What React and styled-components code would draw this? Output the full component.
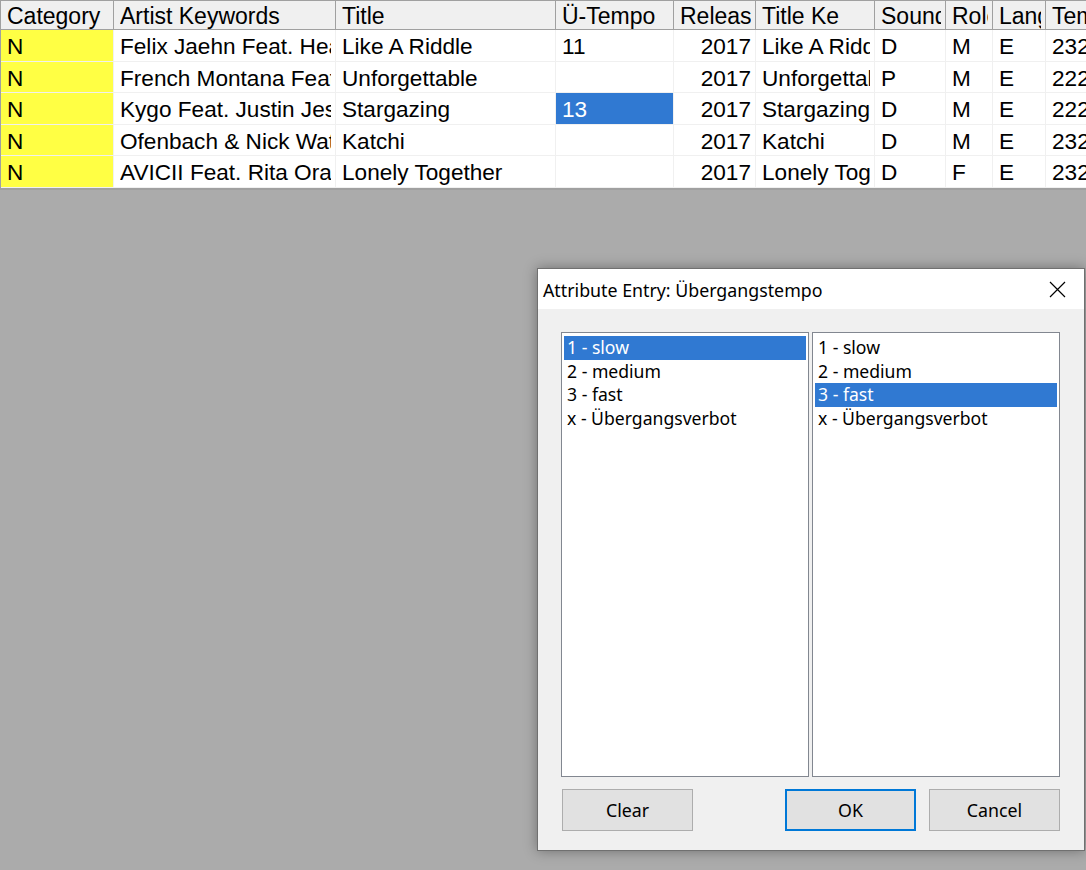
import React from "react";
import styled, { createGlobalStyle, css } from "styled-components";

const Global = createGlobalStyle`
  html, body { margin: 0; padding: 0; }
  body {
    background: #ababab;
    width: 1086px;
    height: 870px;
    overflow: hidden;
    font-family: "Liberation Sans", Arial, sans-serif;
  }
  #root { position: relative; width: 1086px; height: 870px; }
`;

const COLS = "113px 222px 220px 118px 82px 119px 71px 47px 53px 80px";

const Grid = styled.div`
  width: 1086px;
  border-top: 1px solid #a0a0a0;
  border-left: 1px solid #a0a0a0;
  border-bottom: 2px solid #a0a0a0;
  background: #ffffff;
  overflow: hidden;
  box-sizing: border-box;
`;

const Row = styled.div`
  display: grid;
  grid-template-columns: ${COLS};
  height: ${(p) => (p.$header ? "29px" : "31.6px")};
  box-sizing: border-box;
  border-bottom: 1px solid ${(p) => (p.$header ? "#a0a0a0" : "#f0f0f0")};
  background: ${(p) => (p.$header ? "#f0f0f0" : "#ffffff")};
`;

const Cell = styled.div`
  font-size: ${(p) => (p.$header ? "23px" : "22.6px")};
  line-height: ${(p) => (p.$header ? "28px" : "30px")};
  padding-top: ${(p) => (p.$header ? "1px" : "2px")};
  color: #000;
  white-space: nowrap;
  overflow: hidden;
  padding-left: 6px;
  padding-right: 4px;
  box-sizing: border-box;
  border-right: 1px solid ${(p) => (p.$header ? "#a0a0a0" : "#f0f0f0")};
  ${(p) =>
    p.$right &&
    css`
      text-align: right;
      padding-left: 0;
      padding-right: 4px;
    `}
  ${(p) =>
    p.$yellow &&
    css`
      background: #ffff44;
    `}
  ${(p) =>
    p.$selected &&
    css`
      background: #3079d2;
      color: #ffffff;
    `}
`;

const CellText = styled.span`
  display: block;
  overflow: hidden;
  white-space: nowrap;
`;

const headers = [
  "Category",
  "Artist Keywords",
  "Title",
  "Ü-Tempo",
  "Releas",
  "Title Ke",
  "Sound",
  "Role",
  "Language",
  "Tempo",
];

const rows = [
  ["N", "Felix Jaehn Feat. Hearts & Colors", "Like A Riddle", "11", "2017", "Like A Riddle", "D", "M", "E", "2320"],
  ["N", "French Montana Feat. Swae Lee", "Unforgettable", "", "2017", "Unforgettable", "P", "M", "E", "2220"],
  ["N", "Kygo Feat. Justin Jesso", "Stargazing", "13", "2017", "Stargazing", "D", "M", "E", "2220"],
  ["N", "Ofenbach & Nick Waterhouse", "Katchi", "", "2017", "Katchi", "D", "M", "E", "2320"],
  ["N", "AVICII Feat. Rita Ora", "Lonely Together", "", "2017", "Lonely Together", "D", "F", "E", "2320"],
];

const Dialog = styled.div`
  position: absolute;
  left: 537px;
  top: 268px;
  width: 548px;
  height: 583px;
  box-sizing: border-box;
  border: 1px solid #707070;
  background: #f0f0f0;
  box-shadow: 0 0 12px rgba(0, 0, 0, 0.35);
  display: flex;
  flex-direction: column;
  font-family: "Noto Sans", "Open Sans", sans-serif;
`;

const TitleBar = styled.div`
  height: 40px;
  background: #ffffff;
  display: flex;
  align-items: center;
  justify-content: space-between;
  padding: 0 18px 0 5px;
  flex-shrink: 0;
`;

const TitleText = styled.div`
  font-size: 17.8px;
  color: #000;
  padding-top: 2px;
`;

const CloseIcon = styled.svg`
  width: 17px;
  height: 17px;
  display: block;
`;

const Body = styled.div`
  flex: 1;
  display: flex;
  flex-direction: column;
  padding: 23px 24px 20px 23px;
`;

const Lists = styled.div`
  display: flex;
  gap: 3px;
  height: 445px;
`;

const ListBox = styled.div`
  width: 249px;
  height: 100%;
  box-sizing: border-box;
  border: 1px solid #828790;
  background: #ffffff;
  padding: 3px 2px;
  display: flex;
  flex-direction: column;
`;

const Item = styled.div`
  height: 23.6px;
  line-height: 23px;
  font-size: 17.6px;
  padding-left: 3px;
  color: ${(p) => (p.$selected ? "#ffffff" : "#000000")};
  background: ${(p) => (p.$selected ? "#3079d2" : "transparent")};
  white-space: nowrap;
`;

const Buttons = styled.div`
  display: flex;
  margin-top: 12px;
  padding-left: 1px;
  gap: 13px;
`;

const Button = styled.button`
  width: 131px;
  height: 42px;
  box-sizing: border-box;
  background: #e1e1e1;
  border: ${(p) => (p.$default ? "2px solid #0078d7" : "1px solid #adadad")};
  font-family: "Noto Sans", "Open Sans", sans-serif;
  font-size: 17.8px;
  color: #000;
  padding: 0;
  margin: 0;
  ${(p) =>
    p.$pushRight &&
    css`
      margin-left: auto;
    `}
`;

const options = ["1 - slow", "2 - medium", "3 - fast", "x - Übergangsverbot"];

export default function App() {
  return (
    <>
      <Global />
      <Grid>
        <Row $header>
          {headers.map((h) => (
            <Cell $header key={h}>
              <CellText>{h}</CellText>
            </Cell>
          ))}
        </Row>
        {rows.map((r, i) => (
          <Row key={i}>
            {r.map((v, j) => (
              <Cell
                key={j}
                $yellow={j === 0}
                $right={j === 4}
                $selected={i === 2 && j === 3}
              >
                <CellText>{v}</CellText>
              </Cell>
            ))}
          </Row>
        ))}
      </Grid>
      <Dialog>
        <TitleBar>
          <TitleText>Attribute Entry: Übergangstempo</TitleText>
          <CloseIcon viewBox="0 0 17 17">
            <path d="M1 1 L16 16 M16 1 L1 16" stroke="#000" strokeWidth="1.2" fill="none" />
          </CloseIcon>
        </TitleBar>
        <Body>
          <Lists>
            <ListBox>
              {options.map((o, i) => (
                <Item key={o} $selected={i === 0}>
                  {o}
                </Item>
              ))}
            </ListBox>
            <ListBox>
              {options.map((o, i) => (
                <Item key={o} $selected={i === 2}>
                  {o}
                </Item>
              ))}
            </ListBox>
          </Lists>
          <Buttons>
            <Button>Clear</Button>
            <Button $default $pushRight>
              OK
            </Button>
            <Button>Cancel</Button>
          </Buttons>
        </Body>
      </Dialog>
    </>
  );
}
